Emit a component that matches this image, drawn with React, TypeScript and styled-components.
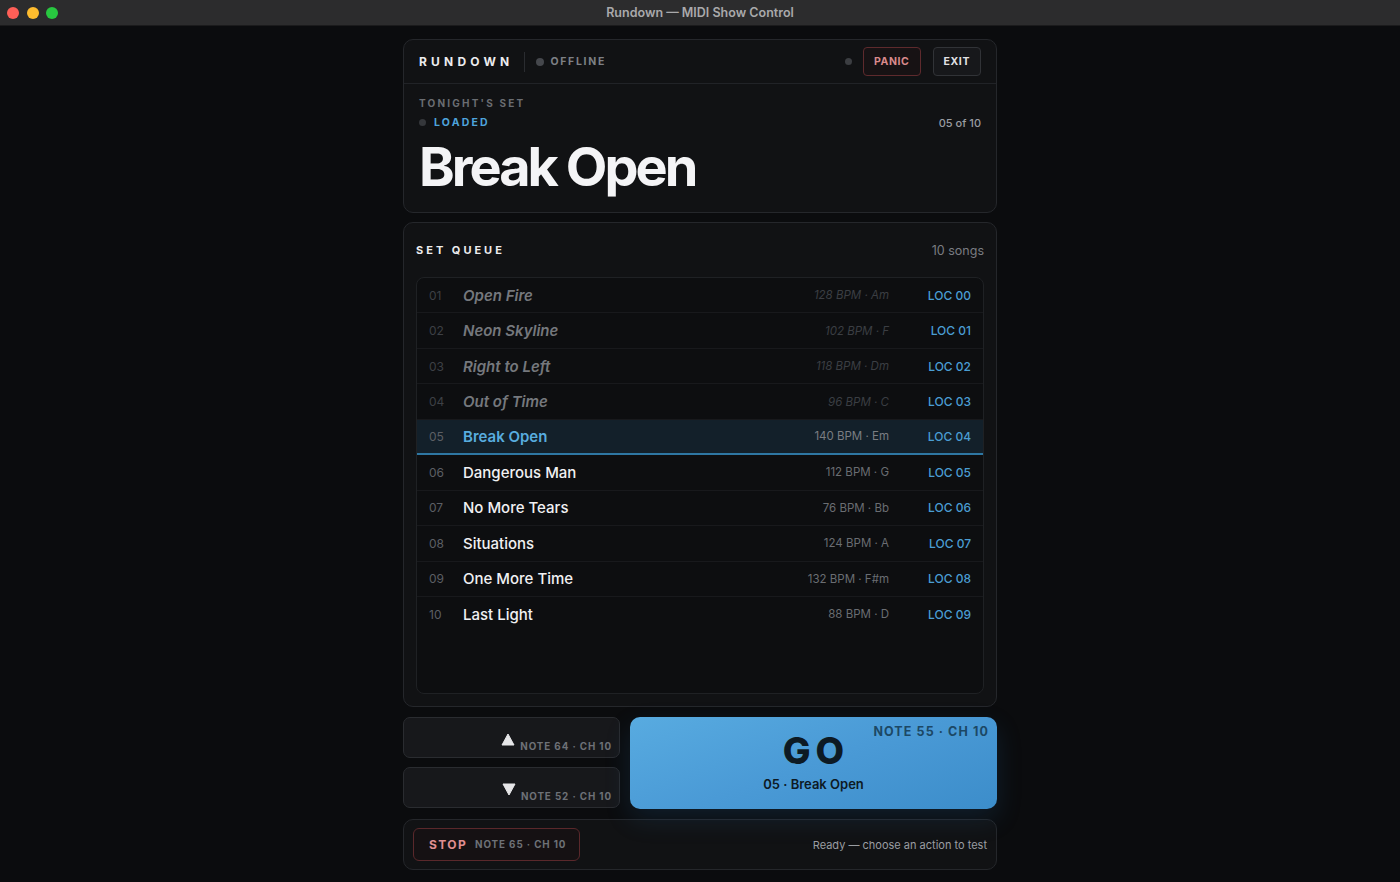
import React from "react";
import styled, { createGlobalStyle, css } from "styled-components";

const GlobalStyle = createGlobalStyle`
  html, body {
    margin: 0;
    padding: 0;
    background: #0b0c0e;
    font-family: Inter, "Noto Sans", "Liberation Sans", sans-serif;
    -webkit-font-smoothing: antialiased;
  }
  * { box-sizing: border-box; }
`;

type SongState = "played" | "current" | "next";

interface Song {
  no: string;
  title: string;
  meta: string;
  loc: string;
}

const songs: Song[] = [
  { no: "01", title: "Open Fire", meta: "128 BPM · Am", loc: "LOC 00" },
  { no: "02", title: "Neon Skyline", meta: "102 BPM · F", loc: "LOC 01" },
  { no: "03", title: "Right to Left", meta: "118 BPM · Dm", loc: "LOC 02" },
  { no: "04", title: "Out of Time", meta: "96 BPM · C", loc: "LOC 03" },
  { no: "05", title: "Break Open", meta: "140 BPM · Em", loc: "LOC 04" },
  { no: "06", title: "Dangerous Man", meta: "112 BPM · G", loc: "LOC 05" },
  { no: "07", title: "No More Tears", meta: "76 BPM · Bb", loc: "LOC 06" },
  { no: "08", title: "Situations", meta: "124 BPM · A", loc: "LOC 07" },
  { no: "09", title: "One More Time", meta: "132 BPM · F#m", loc: "LOC 08" },
  { no: "10", title: "Last Light", meta: "88 BPM · D", loc: "LOC 09" },
];

const CURRENT = 4;

// window chrome
const Window = styled.div`
  width: 100%;
  height: 882px;
  display: flex;
  flex-direction: column;
  background: #0b0c0e;
  overflow: hidden;
`;

const TitleBar = styled.div`
  height: 26px;
  flex: none;
  position: relative;
  display: flex;
  align-items: center;
  justify-content: center;
  background: #2c2c2d;
  border-bottom: 1px solid #1b1b1c;
  color: #a9a9ab;
  font-size: 12.5px;
  font-weight: 600;
`;

const Lights = styled.div`
  position: absolute;
  left: 7px;
  top: 7px;
  display: flex;
  gap: 7.5px;
`;

const Light = styled.span<{ color: string }>`
  width: 12px;
  height: 12px;
  border-radius: 50%;
  background: ${(p) => p.color};
`;

const Main = styled.main`
  width: 594px;
  margin: 0 auto;
  padding-top: 13px;
  display: flex;
  flex-direction: column;
  gap: 9px;
`;

const Card = styled.section`
  background: #111214;
  border: 1px solid #25272b;
  border-radius: 10px;
`;

// header
const TopBar = styled.div`
  height: 44px;
  display: flex;
  align-items: center;
  padding: 0 15px;
  border-bottom: 1px solid #212327;
`;

const Brand = styled.span`
  color: #ececee;
  font-size: 12px;
  font-weight: 700;
  letter-spacing: 4.2px;
`;

const Divider = styled.span`
  width: 1px;
  height: 20px;
  background: #2a2c30;
  margin: 0 11px 0 11px;
`;

const Dot = styled.span<{ size?: number; color?: string }>`
  width: ${(p) => p.size ?? 7}px;
  height: ${(p) => p.size ?? 7}px;
  border-radius: 50%;
  background: ${(p) => p.color ?? "#45474c"};
  flex: none;
`;

const Status = styled.span`
  margin-left: 6px;
  color: #7d8085;
  font-size: 10.5px;
  font-weight: 700;
  letter-spacing: 1.7px;
`;

const Spacer = styled.span`
  flex: 1;
`;

const SmallButton = styled.button<{ danger?: boolean }>`
  height: 29px;
  padding: 0 10px;
  border-radius: 4px;
  font-family: inherit;
  font-size: 10.5px;
  font-weight: 700;
  letter-spacing: 0.6px;
  ${(p) =>
    p.danger
      ? css`
          background: #171214;
          border: 1px solid #5e2a2d;
          color: #d98a8c;
          margin: 0 12px 0 11px;
        `
      : css`
          background: #17181b;
          border: 1px solid #313337;
          color: #e2e2e4;
        `}
`;

const SetInfo = styled.div`
  padding: 13px 15px 14px;
`;

const Eyebrow = styled.div`
  color: #6a6d72;
  font-size: 10px;
  font-weight: 700;
  letter-spacing: 2.2px;
`;

const LoadedRow = styled.div`
  display: flex;
  align-items: center;
  margin-top: 6px;
  height: 15px;
`;

const Loaded = styled.span`
  margin-left: 8px;
  color: #4ea3dc;
  font-size: 10.5px;
  font-weight: 700;
  letter-spacing: 2.2px;
`;

const Count = styled.span`
  margin-left: auto;
  color: #9a9da2;
  font-size: 11px;
  font-weight: 500;
`;

const BigTitle = styled.h1`
  margin: 6px 0 0;
  color: #f4f4f6;
  font-size: 54px;
  font-weight: 700;
  letter-spacing: -0.055em;
  line-height: 62px;
`;

// queue
const QueueCard = styled(Card)`
  padding: 0 12px 12px;
`;

const QueueHead = styled.div`
  height: 54px;
  display: flex;
  align-items: center;
`;

const QueueTitle = styled.span`
  color: #ececee;
  font-size: 11px;
  font-weight: 700;
  letter-spacing: 3px;
`;

const QueueCount = styled.span`
  margin-left: auto;
  color: #7a7d82;
  font-size: 12.5px;
`;

const List = styled.div`
  height: 417px;
  background: #0d0e10;
  border: 1px solid #1f2124;
  border-radius: 8px;
  overflow: hidden;
`;

const Row = styled.div<{ state: SongState }>`
  height: 35.45px;
  display: flex;
  align-items: center;
  padding: 0 12px;
  border-bottom: 1px solid #18191c;
  &:last-child {
    border-bottom-color: transparent;
  }
  ${(p) =>
    p.state === "current" &&
    css`
      background: #13202a;
      border-bottom: 2px solid #2e77a3;
    `}
`;

const Num = styled.span<{ state: SongState }>`
  width: 34px;
  font-size: 12px;
  color: ${(p) => (p.state === "played" ? "#3d4045" : "#5c5f64")};
`;

const SongTitle = styled.span<{ state: SongState }>`
  flex: 1;
  font-size: 15px;
  font-weight: ${(p) => (p.state === "next" ? 500 : 600)};
  font-style: ${(p) => (p.state === "played" ? "italic" : "normal")};
  color: ${(p) =>
    p.state === "played" ? "#75787d" : p.state === "current" ? "#58acdf" : "#f1f1f3"};
`;

const Meta = styled.span<{ state: SongState }>`
  font-size: 11.5px;
  font-style: ${(p) => (p.state === "played" ? "italic" : "normal")};
  color: ${(p) =>
    p.state === "played" ? "#3b3e43" : p.state === "current" ? "#7a7d82" : "#6a6d72"};
`;

const Loc = styled.span`
  width: 82px;
  text-align: right;
  font-size: 12px;
  font-weight: 500;
  color: #4a9dd3;
`;

// transport
const Controls = styled.div`
  display: grid;
  grid-template-columns: 217px 1fr;
  gap: 10px;
  margin-top: 1px;
`;

const NavStack = styled.div`
  display: flex;
  flex-direction: column;
  gap: 9px;
`;

const NavButton = styled.button`
  height: 41px;
  display: flex;
  justify-content: flex-end;
  align-items: flex-end;
  gap: 5px;
  padding: 0 7px 5px;
  background: #17181b;
  border: 1px solid #2a2c30;
  border-radius: 7px;
  font-family: inherit;
`;

const NoteLabel = styled.span`
  color: #6e7177;
  font-size: 9.8px;
  font-weight: 700;
  letter-spacing: 0.9px;
  line-height: 11px;
`;

const GoButton = styled.button`
  position: relative;
  height: 92px;
  display: flex;
  flex-direction: column;
  align-items: center;
  justify-content: center;
  padding: 0 0 4px;
  background: linear-gradient(160deg, #58abe0 0%, #4a9ad6 50%, #3c8dca 100%);
  border: none;
  border-radius: 10px;
  box-shadow: 0 10px 26px rgba(40, 110, 170, 0.18);
  font-family: inherit;
  color: #0d1a24;
`;

const GoText = styled.span`
  font-size: 37px;
  font-weight: 800;
  letter-spacing: 5px;
  line-height: 40px;
  margin: 0 0 5px 5px;
`;

const GoSub = styled.span`
  font-size: 13px;
  font-weight: 600;
`;

const GoNote = styled.span`
  position: absolute;
  top: 7px;
  right: 8px;
  color: #1c4865;
  font-size: 12.5px;
  font-weight: 700;
  letter-spacing: 1.1px;
`;

const StopBar = styled(Card)`
  height: 51px;
  margin-top: 1px;
  display: flex;
  align-items: center;
  padding: 0 9px;
`;

const StopButton = styled.button`
  height: 33px;
  display: flex;
  align-items: center;
  gap: 8px;
  padding: 0 13px 0 15px;
  background: #151113;
  border: 1px solid #5a282b;
  border-radius: 6px;
  font-family: inherit;
`;

const StopText = styled.span`
  color: #e08e90;
  font-size: 12px;
  font-weight: 700;
  letter-spacing: 1.4px;
`;

const Hint = styled.span`
  margin-left: auto;
  color: #9a9da2;
  font-size: 11px;
`;

const Triangle: React.FC<{ down?: boolean }> = ({ down }) => (
  <svg width="14" height="13" viewBox="0 0 14 13" style={{ marginBottom: 6 }}>
    <polygon
      points={down ? "1,1 13,1 7,12" : "7,1 13,12 1,12"}
      fill="#e6e6e8"
      stroke="#e6e6e8"
      strokeWidth="1"
      strokeLinejoin="round"
    />
  </svg>
);

const stateOf = (i: number): SongState =>
  i < CURRENT ? "played" : i === CURRENT ? "current" : "next";

export default function App() {
  return (
    <Window>
      <GlobalStyle />
      <TitleBar>
        <Lights>
          <Light color="#ff5f57" />
          <Light color="#febc2e" />
          <Light color="#28c840" />
        </Lights>
        Rundown — MIDI Show Control
      </TitleBar>
      <Main>
        <Card>
          <TopBar>
            <Brand>RUNDOWN</Brand>
            <Divider />
            <Dot size={8} />
            <Status>OFFLINE</Status>
            <Spacer />
            <Dot size={7} color="#3c3e42" />
            <SmallButton danger>PANIC</SmallButton>
            <SmallButton>EXIT</SmallButton>
          </TopBar>
          <SetInfo>
            <Eyebrow>TONIGHT'S SET</Eyebrow>
            <LoadedRow>
              <Dot size={7} color="#35373b" />
              <Loaded>LOADED</Loaded>
              <Count>05 of 10</Count>
            </LoadedRow>
            <BigTitle>Break Open</BigTitle>
          </SetInfo>
        </Card>

        <QueueCard>
          <QueueHead>
            <QueueTitle>SET QUEUE</QueueTitle>
            <QueueCount>10 songs</QueueCount>
          </QueueHead>
          <List>
            {songs.map((s, i) => {
              const st = stateOf(i);
              return (
                <Row key={s.no} state={st}>
                  <Num state={st}>{s.no}</Num>
                  <SongTitle state={st}>{s.title}</SongTitle>
                  <Meta state={st}>{s.meta}</Meta>
                  <Loc>{s.loc}</Loc>
                </Row>
              );
            })}
          </List>
        </QueueCard>

        <Controls>
          <NavStack>
            <NavButton>
              <Triangle />
              <NoteLabel>NOTE 64 · CH 10</NoteLabel>
            </NavButton>
            <NavButton>
              <Triangle down />
              <NoteLabel>NOTE 52 · CH 10</NoteLabel>
            </NavButton>
          </NavStack>
          <GoButton>
            <GoNote>NOTE 55 · CH 10</GoNote>
            <GoText>GO</GoText>
            <GoSub>05 · Break Open</GoSub>
          </GoButton>
        </Controls>

        <StopBar>
          <StopButton>
            <StopText>STOP</StopText>
            <NoteLabel>NOTE 65 · CH 10</NoteLabel>
          </StopButton>
          <Hint>Ready — choose an action to test</Hint>
        </StopBar>
      </Main>
    </Window>
  );
}
